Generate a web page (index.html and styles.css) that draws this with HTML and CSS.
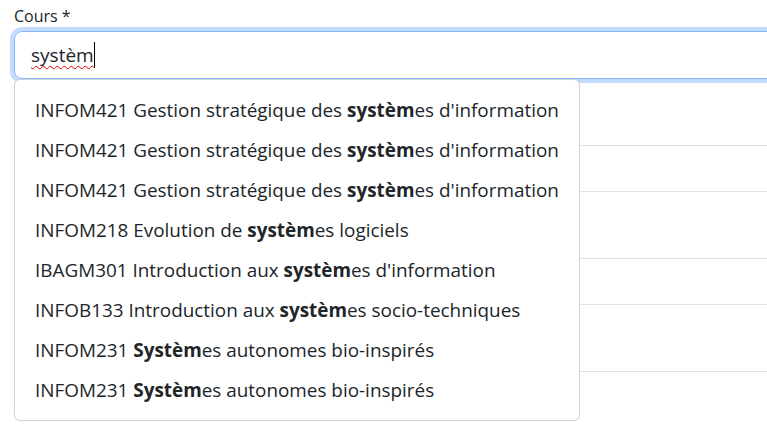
FILE: index.html
```html
<!DOCTYPE html>
<html lang="fr">
<head>
<meta charset="utf-8">
<title>Cours</title>
<link rel="stylesheet" href="styles.css">
</head>
<body>
<div class="page">
  <div class="field">
    <label class="label">Cours *</label>
    <div class="input-wrap">
      <div class="input"><span class="typed">systèm</span><span class="caret"></span></div>
      <ul class="menu">
        <li class="item">INFOM421 Gestion stratégique des <b>systèm</b>es d'information</li>
        <li class="item">INFOM421 Gestion stratégique des <b>systèm</b>es d'information</li>
        <li class="item">INFOM421 Gestion stratégique des <b>systèm</b>es d'information</li>
        <li class="item">INFOM218 Evolution de <b>systèm</b>es logiciels</li>
        <li class="item">IBAGM301 Introduction aux <b>systèm</b>es d'information</li>
        <li class="item">INFOB133 Introduction aux <b>systèm</b>es socio-techniques</li>
        <li class="item">INFOM231 <b>Systèm</b>es autonomes bio-inspirés</li>
        <li class="item">INFOM231 <b>Systèm</b>es autonomes bio-inspirés</li>
      </ul>
    </div>
  </div>
  <div class="table">
    <div class="row r1"></div>
    <div class="row r2"></div>
    <div class="row r3"></div>
    <div class="row r4"></div>
    <div class="row r5"></div>
  </div>
</div>
</body>
</html>
```
FILE: styles.css
```css
html, body {
  margin: 0;
  padding: 0;
  background: #fff;
  overflow: hidden;
}
body {
  width: 767px;
  height: 425px;
  font-family: "Open Sans", "Noto Sans", sans-serif;
  color: #212529;
}
.page {
  width: 780px;
  padding: 4px 0 0 14px;
}
.label {
  display: block;
  font-size: 16px;
  line-height: 24px;
  height: 27px;
}
.input-wrap {
  position: relative;
}
.input {
  box-sizing: border-box;
  height: 48px;
  border: 1px solid #86b7fe;
  border-radius: 8px;
  box-shadow: 0 0 0 4px rgba(13, 110, 253, 0.25);
  padding: 8px 16px;
  font-size: 19px;
  line-height: 30px;
  display: flex;
  align-items: center;
}
.typed {
  text-decoration: underline wavy #e00000;
  text-decoration-thickness: 1px;
  text-underline-offset: 3px;
  text-decoration-skip-ink: none;
}
.caret {
  display: inline-block;
  width: 1px;
  height: 26px;
  background: #000;
}
.menu {
  position: absolute;
  z-index: 2;
  top: 100%;
  left: 0;
  margin: 0;
  padding: 10px 0;
  list-style: none;
  box-sizing: border-box;
  width: 566px;
  background: #fff;
  border: 1px solid rgba(0, 0, 0, 0.175);
  border-radius: 6px;
}
.item {
  height: 40px;
  line-height: 40px;
  padding: 0 20px;
  font-size: 18.9px;
  white-space: nowrap;
}
.item b {
  font-weight: 700;
}
.table {
  margin-top: 21px;
}
.row {
  box-sizing: border-box;
  border-bottom: 1px solid #dee2e6;
}
.r1 { height: 46px; }
.r2 { height: 46px; }
.r3 { height: 67px; }
.r4 { height: 46px; }
.r5 { height: 67px; }
```
